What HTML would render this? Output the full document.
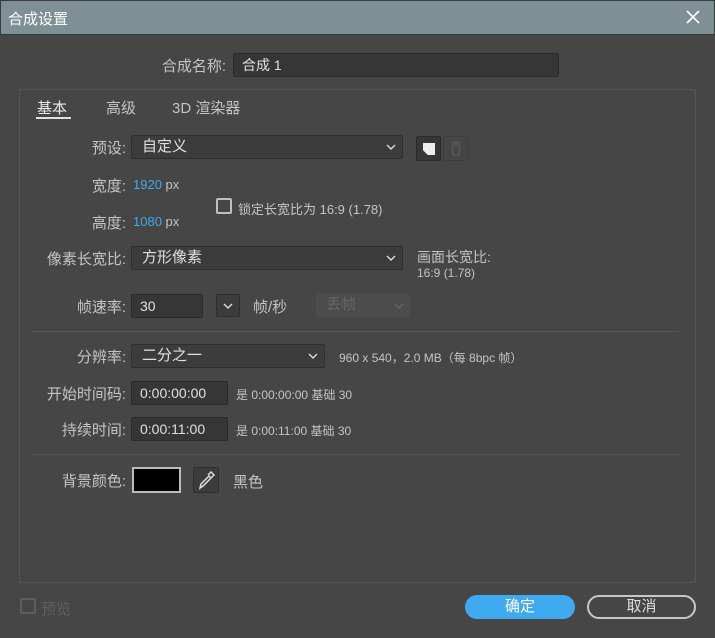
<!DOCTYPE html><html><head><meta charset="utf-8"><style>
*{box-sizing:border-box;margin:0;padding:0}
body{width:715px;height:638px;background:#464646;font-family:"Liberation Sans","Noto Sans CJK SC",sans-serif;color:#c4c4c4;font-size:14px;position:relative;overflow:hidden}
.a{position:absolute;white-space:nowrap}
.title{left:0;top:0;width:715px;height:35px;background:#7e9095;border:1px solid #3a3a3a}
.inp{position:absolute;background:#363636;border:1px solid #2a2a2a;border-radius:2px;color:#e0e0e0;padding-left:8px;font-size:14px}
.sel{position:absolute;background:#3c3c3c;border:1px solid #2e2e2e;border-radius:2px;color:#e0e0e0;padding-left:10px;font-size:15px}
.chev{position:absolute;right:6px;top:7px}
.lbl{position:absolute;text-align:right;font-size:15px;color:#c4c4c4}
.blue{color:#3fa9f0}
.sm{font-size:12px}
</style></head><body>
<div class="a title"></div>
<div class="a" style="left:8px;top:8px;font-size:15px;color:#fff">合成设置</div>
<svg class="a" style="left:686px;top:10px" width="14" height="14"><path d="M1 1L13 13M13 1L1 13" stroke="#fff" stroke-width="1.6"/></svg>

<div class="lbl" style="left:100px;width:126px;top:55px">合成名称:</div>
<div class="inp" style="left:233px;top:53px;width:326px;height:24px;line-height:22px">合成 1</div>

<div class="a" style="left:19px;top:89px;width:677px;height:494px;border:1px solid #555;border-radius:2px"></div>
<div class="a" style="left:37px;top:97px;font-size:15px;color:#e8e8e8">基本</div>
<div class="a" style="left:36px;top:117px;width:35px;height:2px;background:#e0e0e0"></div>
<div class="a" style="left:106px;top:97px;font-size:15px">高级</div>
<div class="a" style="left:172px;top:97px;font-size:15px">3D 渲染器</div>

<div class="lbl" style="left:60px;width:66px;top:137px">预设:</div>
<div class="sel" style="left:131px;top:135px;width:272px;height:24px;line-height:22px">自定义<svg class="chev" width="10" height="8"><path d="M1 2l4 4 4-4" fill="none" stroke="#ddd" stroke-width="1.4"/></svg></div>
<div class="a" style="left:416px;top:136px;width:25px;height:25px;background:#363636;border:1px solid #2a2a2a;border-radius:2px"><div style="position:absolute;left:6px;top:6px;width:12px;height:12px;background:#eee;clip-path:polygon(0 0,100% 0,100% 100%,40% 100%,0 60%)"></div></div>
<div class="a" style="left:443px;top:136px;width:25px;height:25px;border:1px solid #3e3e3e;border-radius:2px"><svg width="23" height="23"><path d="M7 7h10M10 7V5h4v2M8 9h8l-1 9h-6z" fill="none" stroke="#5a5a5a" stroke-width="1.2"/></svg></div>

<div class="lbl" style="left:60px;width:66px;top:175px">宽度:</div>
<div class="a" style="left:133px;top:177px;font-size:13px"><span class="blue">1920</span> px</div>
<div class="lbl" style="left:60px;width:66px;top:212px">高度:</div>
<div class="a" style="left:133px;top:214px;font-size:13px"><span class="blue">1080</span> px</div>
<div class="a" style="left:216px;top:198px;width:16px;height:16px;border:2px solid #c0c0c0;border-radius:2px"></div>
<div class="a" style="left:238px;top:199px;font-size:13px">锁定长宽比为 16:9 (1.78)</div>

<div class="lbl" style="left:20px;width:106px;top:248px">像素长宽比:</div>
<div class="sel" style="left:131px;top:246px;width:272px;height:24px;line-height:22px">方形像素<svg class="chev" width="10" height="8"><path d="M1 2l4 4 4-4" fill="none" stroke="#ddd" stroke-width="1.4"/></svg></div>
<div class="a" style="left:417px;top:247px;font-size:14px">画面长宽比:</div>
<div class="a" style="left:417px;top:266px;font-size:12px">16:9 (1.78)</div>

<div class="lbl" style="left:60px;width:66px;top:296px">帧速率:</div>
<div class="inp" style="left:131px;top:294px;width:72px;height:24px;line-height:22px">30</div>
<div class="a" style="left:216px;top:294px;width:24px;height:23px;background:#3c3c3c;border:1px solid #2e2e2e;border-radius:2px"><svg style="position:absolute;left:6px;top:7px" width="10" height="8"><path d="M1 2l4 4 4-4" fill="none" stroke="#ddd" stroke-width="1.4"/></svg></div>
<div class="a" style="left:253px;top:296px;font-size:15px">帧/秒</div>
<div class="a" style="left:316px;top:294px;width:94px;height:24px;background:#4c4c4c;border-radius:2px;color:#666;padding-left:10px;line-height:22px;font-size:15px">丢帧<svg style="position:absolute;right:6px;top:8px" width="10" height="8"><path d="M1 2l4 4 4-4" fill="none" stroke="#666" stroke-width="1.4"/></svg></div>

<div class="a" style="left:32px;top:331px;width:647px;height:1px;background:#555"></div>

<div class="lbl" style="left:40px;width:86px;top:346px">分辨率:</div>
<div class="sel" style="left:131px;top:344px;width:194px;height:24px;line-height:22px">二分之一<svg class="chev" width="10" height="8"><path d="M1 2l4 4 4-4" fill="none" stroke="#ddd" stroke-width="1.4"/></svg></div>
<div class="a sm" style="left:339px;top:349px">960 x 540，2.0 MB（每 8bpc 帧）</div>

<div class="lbl" style="left:20px;width:106px;top:383px">开始时间码:</div>
<div class="inp" style="left:131px;top:381px;width:97px;height:24px;line-height:22px">0:00:00:00</div>
<div class="a sm" style="left:236px;top:386px">是 0:00:00:00 基础 30</div>

<div class="lbl" style="left:20px;width:106px;top:419px">持续时间:</div>
<div class="inp" style="left:131px;top:417px;width:97px;height:24px;line-height:22px">0:00:11:00</div>
<div class="a sm" style="left:236px;top:422px">是 0:00:11:00 基础 30</div>

<div class="a" style="left:32px;top:454px;width:647px;height:1px;background:#555"></div>

<div class="lbl" style="left:40px;width:86px;top:470px">背景颜色:</div>
<div class="a" style="left:132px;top:467px;width:49px;height:26px;background:#000;border:2px solid #bbb"></div>
<div class="a" style="left:193px;top:467px;width:26px;height:26px;background:#3c3c3c;border:1px solid #2e2e2e;border-radius:2px"><svg width="24" height="24" viewBox="0 0 24 24"><path d="M6 20l1-4 8-8 2 2-8 8z M14 7l3-3 3 3-3 3" fill="none" stroke="#ddd" stroke-width="1.5"/></svg></div>
<div class="a" style="left:233px;top:471px;font-size:15px">黑色</div>

<div class="a" style="left:20px;top:598px;width:16px;height:16px;border:2px solid #5e5e5e;border-radius:2px"></div>
<div class="a" style="left:41px;top:598px;font-size:15px;color:#5e5e5e">预览</div>
<div class="a" style="left:465px;top:595px;width:110px;height:24px;background:#3fa9f0;border-radius:12px;color:#fff;text-align:center;line-height:24px;font-size:15px">确定</div>
<div class="a" style="left:587px;top:595px;width:109px;height:24px;border:2px solid #c8c8c8;border-radius:12px;color:#ddd;text-align:center;line-height:20px;font-size:15px">取消</div>
</body></html>
